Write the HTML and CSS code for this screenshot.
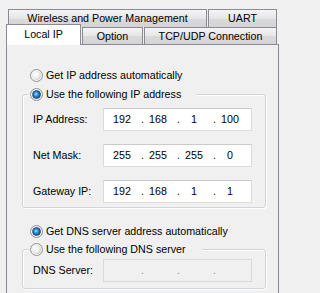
FILE: index.html
```html
<!DOCTYPE html>
<html>
<head>
<meta charset="utf-8">
<title>Local IP</title>
<link rel="stylesheet" href="styles.css">
</head>
<body>
<div class="window">
  <div class="tabrow row1">
    <div class="tab t-wireless">Wireless and Power Management</div>
    <div class="tab t-uart">UART</div>
  </div>
  <div class="tabrow row2">
    <div class="tab selected t-local">Local IP</div>
    <div class="tab t-option">Option</div>
    <div class="tab t-tcp">TCP/UDP Connection</div>
  </div>
  <div class="panel">
    <div class="radio-row ip-auto">
      <svg class="rb" width="13" height="13" viewBox="0 0 13 13"><defs><radialGradient id="ua" cx="0.4" cy="0.4" r="0.65"><stop offset="0" stop-color="#ffffff"/><stop offset="0.6" stop-color="#eeeeee"/><stop offset="1" stop-color="#c6c8cb"/></radialGradient></defs><circle cx="6.5" cy="6.5" r="6" fill="#f6f6f6" stroke="#8f9091"/><circle cx="6.5" cy="6.5" r="4.6" fill="url(#ua)"/></svg>
      <span>Get IP address automatically</span>
    </div>
    <div class="group ip-group">
      <div class="legend">
        <svg class="rb" width="13" height="13" viewBox="0 0 13 13"><defs><radialGradient id="ca" cx="0.45" cy="0.45" r="0.6"><stop offset="0" stop-color="#a8e4ff"/><stop offset="0.45" stop-color="#2b87cf"/><stop offset="1" stop-color="#0d3f74"/></radialGradient></defs><circle cx="6.5" cy="6.5" r="6" fill="#f2f2f2" stroke="#8f9091"/><circle cx="6.5" cy="6.5" r="4" fill="url(#ca)" stroke="#1c4a78" stroke-width="0.7"/></svg>
        <span>Use the following IP address</span>
      </div>
      <div class="field-row ip-row">
        <span class="label">IP Address:</span>
        <div class="ipbox"><span class="seg">192</span><span class="dot">.</span><span class="seg">168</span><span class="dot">.</span><span class="seg">1</span><span class="dot">.</span><span class="seg">100</span></div>
      </div>
      <div class="field-row">
        <span class="label">Net Mask:</span>
        <div class="ipbox"><span class="seg">255</span><span class="dot">.</span><span class="seg">255</span><span class="dot">.</span><span class="seg">255</span><span class="dot">.</span><span class="seg">0</span></div>
      </div>
      <div class="field-row">
        <span class="label">Gateway IP:</span>
        <div class="ipbox"><span class="seg">192</span><span class="dot">.</span><span class="seg">168</span><span class="dot">.</span><span class="seg">1</span><span class="dot">.</span><span class="seg">1</span></div>
      </div>
    </div>
    <div class="radio-row dns-auto">
      <svg class="rb" width="13" height="13" viewBox="0 0 13 13"><defs><radialGradient id="cb" cx="0.45" cy="0.45" r="0.6"><stop offset="0" stop-color="#a8e4ff"/><stop offset="0.45" stop-color="#2b87cf"/><stop offset="1" stop-color="#0d3f74"/></radialGradient></defs><circle cx="6.5" cy="6.5" r="6" fill="#f2f2f2" stroke="#8f9091"/><circle cx="6.5" cy="6.5" r="4" fill="url(#cb)" stroke="#1c4a78" stroke-width="0.7"/></svg>
      <span>Get DNS server address automatically</span>
    </div>
    <div class="group dns-group">
      <div class="legend">
        <svg class="rb" width="13" height="13" viewBox="0 0 13 13"><defs><radialGradient id="ub" cx="0.4" cy="0.4" r="0.65"><stop offset="0" stop-color="#ffffff"/><stop offset="0.6" stop-color="#eeeeee"/><stop offset="1" stop-color="#c6c8cb"/></radialGradient></defs><circle cx="6.5" cy="6.5" r="6" fill="#f6f6f6" stroke="#8f9091"/><circle cx="6.5" cy="6.5" r="4.6" fill="url(#ub)"/></svg>
        <span>Use the following DNS server</span>
      </div>
      <div class="field-row dns-row">
        <span class="label">DNS Server:</span>
        <div class="ipbox disabled"><span class="seg"></span><span class="dot">.</span><span class="seg"></span><span class="dot">.</span><span class="seg"></span><span class="dot">.</span><span class="seg"></span></div>
      </div>
    </div>
  </div>
</div>
</body>
</html>
```

FILE: styles.css
```css
html, body {
  margin: 0;
  padding: 0;
  background: #f0f0f0;
  overflow: hidden;
}
body {
  font-family: "Liberation Sans", Arial, sans-serif;
  font-size: 10.7px;
  line-height: 13px;
  color: #000;
}
.window {
  width: 283px;
  height: 293px;
  overflow: hidden;
}
.tabrow {
  display: flex;
}
.row1 {
  padding-top: 9px;
  padding-left: 8px;
  height: 18px;
}
.row2 {
  padding-left: 6px;
  height: 17px;
}
.tab {
  box-sizing: border-box;
  border: 1px solid #898c95;
  border-bottom: none;
  background: linear-gradient(#f4f4f4, #e6e6e6 50%, #dadada 52%, #d4d4d4);
  display: flex;
  align-items: center;
  justify-content: center;
  white-space: nowrap;
}
.row1 .tab { height: 18px; }
.row2 .tab { height: 17px; }
.t-wireless { width: 199px; margin-right: 1px; }
.t-uart { width: 69px; }
.t-local { width: 75px; }
.t-option { width: 61px; margin-left: 1px; margin-right: 1px; }
.t-tcp { width: 133px; }
.row2 .tab.selected {
  position: relative;
  z-index: 1;
  background: #ffffff;
  height: 21px;
  margin-top: -3px;
  padding-bottom: 2px;
}
.panel {
  box-sizing: border-box;
  margin-left: 6px;
  width: 273px;
  height: 270px;
  border: 1px solid #898c95;
  background: #f0f0f0;
  padding-top: 23px;
}
.radio-row, .legend {
  display: flex;
  align-items: center;
  height: 15px;
}
.rb {
  flex: none;
  margin-right: 3px;
}
.radio-row {
  margin-left: 23px;
}
.group {
  box-sizing: border-box;
  margin-left: 15px;
  width: 244px;
  border: 1px solid #cfd6db;
  border-radius: 3px;
  box-shadow: inset 1px 1px 0 #ffffff, 1px 1px 0 #ffffff;
}
.ip-group {
  margin-top: 11px;
  padding-bottom: 4px;
}
.dns-auto {
  margin-top: 16px;
}
.dns-group {
  margin-top: 10px;
  padding-bottom: 6px;
}
.legend {
  width: fit-content;
  margin-top: -8px;
  margin-left: 6px;
  padding-left: 1px;
  padding-right: 16px;
  background: #f0f0f0;
}
.field-row {
  display: flex;
  align-items: center;
  margin-top: 13px;
}
.ip-row { margin-top: 6px; }
.dns-row { margin-top: 2px; }
.label {
  width: 70px;
  margin-left: 10px;
}
.ipbox {
  box-sizing: border-box;
  width: 149px;
  height: 23px;
  display: flex;
  align-items: center;
  padding-left: 6px;
  background: #ffffff;
  border: 1px solid #dcdcdc;
  border-top-color: #cbcbcb;
}
.seg {
  width: 24px;
  text-align: center;
}
.dot {
  width: 12px;
  padding-left: 7px;
  box-sizing: border-box;
}
.ipbox.disabled {
  background: #f0f0f0;
  border-color: #d9d9d9;
  color: #8a8a8a;
}
```
